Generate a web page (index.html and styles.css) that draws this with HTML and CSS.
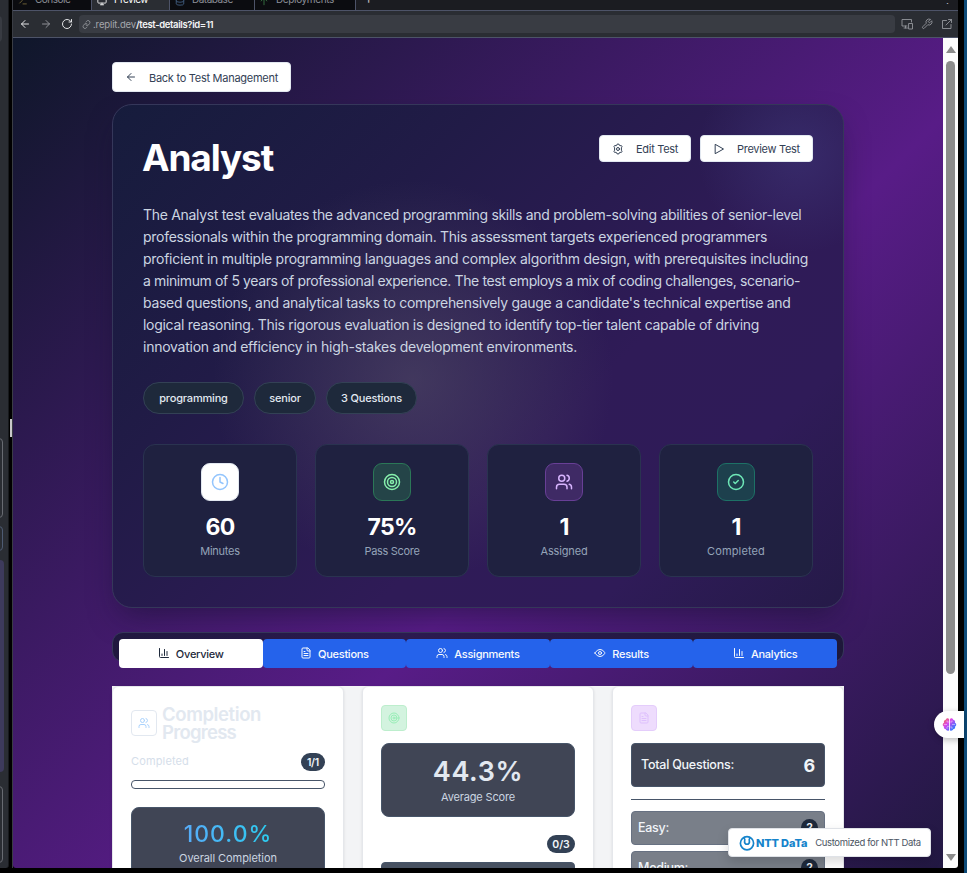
FILE: index.html
```html
<!DOCTYPE html>
<html lang="en">
<head>
<meta charset="utf-8">
<title>Test Details</title>
<link rel="stylesheet" href="styles.css">
</head>
<body>
<svg class="defs" width="0" height="0">
  <symbol id="users" viewBox="0 0 24 24"><path d="M16 21v-2a4 4 0 0 0-4-4H6a4 4 0 0 0-4 4v2"/><circle cx="9" cy="7" r="4"/><path d="M22 21v-2a4 4 0 0 0-3-3.87M16 3.13a4 4 0 0 1 0 7.75"/></symbol>
  <symbol id="target" viewBox="0 0 24 24"><circle cx="12" cy="12" r="10"/><circle cx="12" cy="12" r="6"/><circle cx="12" cy="12" r="2"/></symbol>
  <symbol id="file" viewBox="0 0 24 24"><path d="M15 2H6a2 2 0 0 0-2 2v16a2 2 0 0 0 2 2h12a2 2 0 0 0 2-2V7Z"/><path d="M14 2v4a2 2 0 0 0 2 2h4M10 9H8M16 13H8M16 17H8"/></symbol>
  <symbol id="chart" viewBox="0 0 24 24"><path d="M3 3v16a2 2 0 0 0 2 2h16M18 17V9M13 17V5M8 17v-3"/></symbol>
  <symbol id="left" viewBox="0 0 24 24"><path d="m12 19-7-7 7-7M19 12H5"/></symbol>
</svg>
<div class="screen">
  <aside class="side"><div class="side-a"></div><div class="side-b"></div><div class="side-c"></div><div class="side-d"></div><div class="side-e"></div></aside>
  <div class="gutter"><i></i></div>
  <main class="window">
    <div class="tabs-strip">
      <div class="wtab w1"><svg class="ic" viewBox="0 0 24 24"><path d="m4 17 6-6-6-6M12 19h8"/></svg><span>Console</span></div>
      <div class="wtab w2"><svg class="ic" viewBox="0 0 24 24"><rect x="2" y="3" width="20" height="14" rx="2"/><path d="M8 21h8M12 17v4"/></svg><span>Preview</span></div>
      <div class="wtab w3"><svg class="ic" viewBox="0 0 24 24"><ellipse cx="12" cy="5" rx="9" ry="3"/><path d="M3 5v14a9 3 0 0 0 18 0V5M3 12a9 3 0 0 0 18 0"/></svg><span>Database</span></div>
      <div class="wtab w4"><svg class="ic" viewBox="0 0 24 24"><path d="m5 12 7-7 7 7M12 5v16"/></svg><span>Deployments</span></div>
      <div class="wplus">+</div><div class="wdots">⋮</div>
    </div>
    <div class="toolbar">
      <svg class="ic nav" viewBox="0 0 24 24"><use href="#left"/></svg>
      <svg class="ic nav dim" viewBox="0 0 24 24"><path d="m12 5 7 7-7 7M5 12h14"/></svg>
      <svg class="ic nav re" viewBox="0 0 24 24"><path d="M21 12a9 9 0 1 1-9-9c2.520 0 4.930 1 6.740 2.740L21 8M21 3v5h-5"/></svg>
      <div class="url"><svg class="ic" viewBox="0 0 24 24"><g transform="rotate(-8 12 12)"><path d="M10 13a5 5 0 0 0 7.540.54l3-3a5 5 0 0 0-7.070-7.070l-1.720 1.710M14 11a5 5 0 0 0-7.540-.54l-3 3a5 5 0 0 0 7.070 7.070l1.710-1.710"/></g></svg><span class="host">.replit.dev</span><span class="path">/test-details?id=11</span></div>
      <svg class="ic tool" viewBox="0 0 24 24"><path d="M12 16H2V3h19v5M9 16v4M6 20h7"/><rect x="16" y="11" width="7" height="11"/></svg>
      <svg class="ic tool" viewBox="0 0 24 24"><path d="M14.700 6.300a1 1 0 0 0 0 1.400l1.600 1.600a1 1 0 0 0 1.400 0l3.770-3.770a6 6 0 0 1-7.940 7.940l-6.910 6.910a2.120 2.120 0 0 1-3-3l6.910-6.910a6 6 0 0 1 7.940-7.940z"/></svg>
      <svg class="ic tool" viewBox="0 0 24 24"><path d="M15 3h6v6M10 14 21 3M20 13v8H3V5h8"/></svg>
    </div>
    <div class="view">
      <div class="page">
        <a class="btn back"><svg class="ic" viewBox="0 0 24 24"><use href="#left"/></svg><span>Back to Test Management</span></a>
        <section class="hero">
          <div class="hero-top">
            <h1>Analyst</h1>
            <div class="actions">
              <a class="btn edit"><svg class="ic" viewBox="0 0 24 24"><path d="M9.700 4.100 10.600 2h2.800l.9 2.100 2 1.200 2.300-.3 1.600 2.600-1.400 1.900v5l1.400 1.900-1.600 2.600-2.300-.3-2 1.200-.9 2.100h-2.800l-.9-2.100-2-1.200-2.300.3-1.600-2.600 1.400-1.900v-5L3.800 7.600 5.400 5l2.300.3Z"/><circle cx="12" cy="12" r="3"/></svg><span>Edit Test</span></a>
              <a class="btn prev"><svg class="ic" viewBox="0 0 24 24"><path d="m5 3 16 9-16 9Z"/></svg><span>Preview Test</span></a>
            </div>
          </div>
          <p class="desc">
            <span>The Analyst test evaluates the advanced programming skills and problem-solving abilities of senior-level</span>
            <span>professionals within the programming domain. This assessment targets experienced programmers</span>
            <span>proficient in multiple programming languages and complex algorithm design, with prerequisites including</span>
            <span>a minimum of 5 years of professional experience. The test employs a mix of coding challenges, scenario-</span>
            <span>based questions, and analytical tasks to comprehensively gauge a candidate's technical expertise and</span>
            <span>logical reasoning. This rigorous evaluation is designed to identify top-tier talent capable of driving</span>
            <span>innovation and efficiency in high-stakes development environments.</span>
          </p>
          <div class="pills"><b class="p1">programming</b><b class="p2">senior</b><b class="p3">3 Questions</b></div>
          <div class="stats">
            <div class="stat s1"><div class="tile white"><svg class="ic" viewBox="0 0 24 24"><circle cx="12" cy="12" r="10"/><path d="M12 6v6l4 2"/></svg></div><strong>60</strong><em>Minutes</em></div>
            <div class="stat s2"><div class="tile green"><svg class="ic" viewBox="0 0 24 24"><use href="#target"/></svg></div><strong>75%</strong><em>Pass Score</em></div>
            <div class="stat s3"><div class="tile violet"><svg class="ic" viewBox="0 0 24 24"><use href="#users"/></svg></div><strong>1</strong><em>Assigned</em></div>
            <div class="stat s4"><div class="tile teal"><svg class="ic" viewBox="0 0 24 24"><circle cx="12" cy="12" r="10"/><path d="m9 12 2 2 4-4"/></svg></div><strong>1</strong><em>Completed</em></div>
          </div>
        </section>
        <nav class="tabs">
          <a class="on"><svg class="ic" viewBox="0 0 24 24"><use href="#chart"/></svg><span>Overview</span></a>
          <a><svg class="ic" viewBox="0 0 24 24"><use href="#file"/></svg><span>Questions</span></a>
          <a><svg class="ic" viewBox="0 0 24 24"><use href="#users"/></svg><span>Assignments</span></a>
          <a><svg class="ic" viewBox="0 0 24 24"><path d="M2 12s3.500-7 10-7 10 7 10 7-3.500 7-10 7-10-7-10-7Z"/><circle cx="12" cy="12" r="3"/></svg><span>Results</span></a>
          <a><svg class="ic" viewBox="0 0 24 24"><use href="#chart"/></svg><span>Analytics</span></a>
        </nav>
        <div class="panels">
          <article class="card c1">
            <div class="chead"><div class="mini outline"><svg class="ic" viewBox="0 0 24 24"><use href="#users"/></svg></div><h2>Completion<br><span>Progress</span></h2></div>
            <div class="crow"><span class="ghost">Completed</span><b class="chip">1/1</b></div>
            <div class="bar"></div>
            <div class="box overall"><strong>100.0%</strong><em>Overall Completion</em></div>
          </article>
          <article class="card c2">
            <div class="mini mint"><svg class="ic" viewBox="0 0 24 24"><use href="#target"/></svg></div>
            <div class="box avg"><strong>44.3%</strong><em>Average Score</em></div>
            <div class="crow2"><b class="chip">0/3</b></div>
            <div class="box stub"></div>
          </article>
          <article class="card c3">
            <div class="mini lilac"><svg class="ic" viewBox="0 0 24 24"><use href="#file"/></svg></div>
            <div class="box total"><span>Total Questions:</span><strong>6</strong></div>
            <hr>
            <div class="level"><span>Easy:</span><b>2</b></div>
            <div class="level"><span>Medium:</span><b>2</b></div>
          </article>
        </div>
      </div>
      <div class="scroll"><i class="up"></i><i class="thumb"></i><i class="down"></i></div>
    </div>
  </main>
  <div class="edge"></div>
</div>
<div class="brain"><svg viewBox="0 0 24 24"><defs><linearGradient id="bg1" x1="0" y1="0" x2="24" y2="24" gradientUnits="userSpaceOnUse"><stop offset="0.1" stop-color="#f9703e"/><stop offset=".4" stop-color="#d946ef"/><stop offset=".8" stop-color="#2f7bff"/></linearGradient></defs><path fill="url(#bg1)" d="M11.300 3C9 1 6.500 2.500 6 4.500 3.500 5 2.500 7 3.200 9 .5 10.500.5 13.500 3 15c-.5 2.500 1 4.500 3.200 4.500C7 22 10 22.500 11.300 21ZM12.700 3C15 1 17.500 2.500 18 4.500 20.500 5 21.500 7 20.800 9c2.700 1.500 2.700 4.500.2 6 .5 2.500-1 4.500-3.200 4.500C17 22 14 22.500 12.700 21Z"/><path d="M11 8H8V5.500M3 12h5M8 16v3M11 15H8M13 8h3V5.500M21 12h-5M16 19v-3h-3" fill="none" stroke="#fff" stroke-width=".7"/></svg></div>
<div class="badge"><svg class="ring" viewBox="0 0 16 16"><circle cx="8" cy="8.300" r="6.600"/><path d="M4.600 2.600C6.500 4 6 5 5.600 6.300a2.450 2.450 0 1 0 4.800 0C10 5 9.500 4 11.400 2.600"/></svg><span class="ntt">NTT DaTa</span><span class="cust">Customized for NTT Data</span></div>
</body>
</html>
```
FILE: styles.css
```css
* { box-sizing: border-box; }
body { margin: 0; width: 967px; height: 873px; overflow: hidden; position: relative; background: #000; font-family: Inter, "Open Sans", sans-serif; font-size: 11px; color: #e2e8f0; }
.defs { position: absolute; }
.ic { fill: none; stroke: currentColor; stroke-width: 2; stroke-linecap: round; stroke-linejoin: round; flex: none; display: block; }
span, b, em, strong, h1 { white-space: nowrap; }
em { font-style: normal; }
.screen { display: flex; height: 868px; }

/* neighbouring pane */
.side { width: 9px; background: #2a2d33; border-right: 1px solid #17191d; border-radius: 0 0 3px 0; overflow: hidden; display: flex; flex-direction: column; flex: none; }
.side div { margin-left: -5px; border-radius: 0 4px 4px 0; flex: none; }
.side-a { height: 26px; width: 7px; background: #383b42; margin-top: 16px; }
.side-b { height: 80px; width: 8px; border: 1px solid #686b72; margin-top: 396px; }
.side-c { height: 25px; width: 8px; border: 1px solid #4e5b73; margin-top: 8px; }
.side-d { height: 212px; width: 9px; background: #3d3a5c; margin-top: 9px; }
.side-e { height: 77px; width: 8px; border: 1px solid #686b72; margin-top: 14px; }
.gutter { width: 4px; display: flex; align-items: center; flex: none; border-right: 1px solid #3a3d44; }
.gutter i { width: 2px; height: 18px; background: #c9c9c9; margin: -12px 0 0 1px; }

/* preview window chrome */
.window { width: 945px; display: flex; flex-direction: column; overflow: hidden; border-radius: 0 0 3px 3px; }
.tabs-strip { height: 11px; display: flex; background: #1b1c21; border-bottom: 1px solid #4d5368; overflow: hidden; flex: none; }
.wtab { height: 11px; display: flex; align-items: flex-end; gap: 7px; background: #0b0c10; color: #8d9098; font-size: 10px; line-height: 14px; border-right: 1px solid #4d5368; flex: none; padding-bottom: 2px; padding-left: 5px; letter-spacing: -.5px; }
.wtab svg { width: 10px; height: 10px; margin-bottom: 3px; }
.wtab span { margin-bottom: 3px; }
.w1 { width: 79px; } .w1 svg { color: #7d6d3c; }
.w2 { width: 78px; background: #2a2d33; color: #fff; }
.w3 { width: 85px; } .w3 svg { color: #46658a; }
.w4 { width: 101px; padding-left: 4px; letter-spacing: -.36px; } .w4 svg { color: #3b7c47; }
.wplus { color: #b5b7bb; font-size: 14px; line-height: 0; margin: -2px 0 0 8px; }
.wdots { color: #b5b7bb; font-size: 11px; line-height: 0; margin-left: auto; width: 16px; }
.toolbar { height: 27px; background: #2a2d33; border-bottom: 1px solid #4d5368; display: flex; align-items: center; flex: none; padding: 0 6px; }
.nav { width: 12px; height: 12px; margin-right: 9px; color: #e3e4e6; }
.nav.dim { color: #8f9197; }
.nav.re { margin-right: 6px; }
.url { height: 18px; width: 816px; background: #393c43; border-radius: 4px; display: flex; align-items: center; font-size: 9.500px; padding-left: 3px; margin-right: 6px; flex: none; }
.url svg { width: 9px; height: 9px; color: #9a9ca2; margin-right: 2px; }
.host { color: #a4a6ab; letter-spacing: -.134px; }
.path { color: #f5f5f6; font-weight: 600; letter-spacing: -.35px; }
.tool { width: 12px; height: 12px; color: #9a9ca2; margin-right: 8px; stroke-width: 1.700; }

.view { flex: 1; display: flex; min-height: 0; }
.page { width: 930px; padding: 24px 99px 0; overflow: hidden; background: linear-gradient(135deg, #0f172a 0%, #581c87 50%, #0f172a 100%) 0 0 / 930px 1088px; }
.scroll { width: 15px; background: #fcfcfc; display: flex; flex-direction: column; align-items: center; padding: 8px 0 7px; }
.up, .down { width: 0; height: 0; border: 5px solid transparent; }
.up { border-bottom: 7px solid #8b8b8b; border-top: 0; }
.down { border-top: 7px solid #8b8b8b; border-bottom: 0; margin-top: auto; }
.thumb { width: 9px; height: 613px; border-radius: 5px; background: #8b8b8b; margin-top: 8px; }
.edge { width: 3px; height: 873px; margin-left: auto; background: #0d4a77; }

.btn { display: inline-flex; align-items: center; background: #fff; border: 1px solid #e2e8f0; border-radius: 4px; color: #334155; font-size: 11px; }
.btn svg { width: 12px; height: 12px; }
.btn span { margin-top: 1px; }
.back { width: 179px; height: 30px; padding-left: 12px; display: flex; }
.back svg { margin-right: 12px; }
.back span { letter-spacing: -.27px; }

/* test summary */
.hero { width: 732px; height: 504px; margin-top: 12px; padding: 30px; border: 1px solid #35375a; border-radius: 20px; box-shadow: 0 14px 30px -8px rgba(15, 15, 40, .5);
  background: radial-gradient(circle at 685px 48px, rgba(66, 62, 130, .45), rgba(66, 62, 130, 0) 100px), radial-gradient(circle at 300px 275px, rgba(90, 84, 108, .5), rgba(90, 84, 108, 0) 200px), linear-gradient(135deg, #161c3c 0%, #211b47 30%, #2f1b57 62%, #2f1b58 80%, #251a48 100%); }
.hero-top { display: flex; justify-content: space-between; height: 69px; }
h1 { margin: 0 0 0 -1px; font-size: 37px; line-height: 46px; font-weight: 700; color: #fff; letter-spacing: -1.150px; }
.actions { display: flex; gap: 9px; }
.actions .btn { height: 27px; }
.edit { width: 92px; padding-left: 12px; }
.prev { width: 113px; padding-left: 12px; }
.actions svg { margin-right: 12px; }
.actions span { letter-spacing: -.29px; }
.desc { margin: 0; font-size: 14px; line-height: 22px; color: #cbd5e1; }
.desc span { display: block; letter-spacing: -.309px; }
.desc span:nth-child(2) { letter-spacing: -.282px; }
.desc span:nth-child(3) { letter-spacing: -.266px; }
.desc span:nth-child(4) { letter-spacing: -.384px; }
.desc span:nth-child(5) { letter-spacing: -.292px; }
.desc span:nth-child(6) { letter-spacing: -.302px; }
.desc span:nth-child(7) { letter-spacing: -.25px; }
.pills { display: flex; gap: 10px; margin-top: 24px; }
.pills b { height: 32px; border-radius: 16px; border: 1px solid #334155; background: #1e293b; display: flex; align-items: center; justify-content: center; font-weight: 500; font-size: 11px; letter-spacing: -.18px; }
.p1 { width: 101px; } .p2 { width: 62px; } .p3 { width: 91px; }
.stats { display: grid; grid-template-columns: repeat(4, 1fr); gap: 18px; margin-top: 30px; }
.stat { height: 133px; border: 1px solid #2a3350; border-radius: 12px; background: #1f2140; display: flex; flex-direction: column; align-items: center; padding-top: 18px; }
.tile { width: 38px; height: 38px; border-radius: 9px; border: 1px solid; display: flex; align-items: center; justify-content: center; }
.tile svg { width: 18px; height: 18px; }
.white { background: #fff; border-color: #e2e8f0; color: #93c5fd; }
.green { background: #244448; border-color: #2b7757; color: #86efac; }
.violet { background: #3f2a65; border-color: #683f96; color: #d8b4fe; }
.teal { background: #1d404d; border-color: #1d7166; color: #6ee7b7; }
.stat strong { font-size: 23px; line-height: 28px; margin-top: 12px; color: #fff; font-weight: 700; letter-spacing: -.73px; }
.stat em { font-size: 11px; line-height: 16px; margin-top: 2px; color: #94a3b8; letter-spacing: -.26px; }
.s2 em { letter-spacing: -.322px; }
.s3 em { letter-spacing: -.158px; }
.s4 em { letter-spacing: .142px; }

.tabs { height: 30px; margin-top: 24px; padding: 6px; border: 1px solid #35375a; border-radius: 11px; background: linear-gradient(90deg, #20183f, #2c1a50 40%, #1e183a); display: grid; grid-template-columns: repeat(5, 1fr); }
.tabs a { height: 29px; background: #2563eb; color: #f8fafc; border-radius: 4px; display: flex; align-items: center; justify-content: center; gap: 6px; font-weight: 500; letter-spacing: -.26px; }
.tabs .on { background: #fff; color: #1e293b; }
.tabs svg { width: 12px; height: 12px; margin-top: -2px; }

/* overview cards */
.panels { display: grid; grid-template-columns: repeat(3, 1fr); gap: 18px; background: #f3f4f6; height: 300px; margin-top: 24px; }
.card { background: #fff; border: 1px solid #e5e7eb; border-radius: 6px; padding: 18px; box-shadow: 0 1px 3px rgba(0, 0, 0, .1); }
.mini { width: 26px; height: 26px; border: 1px solid; border-radius: 4px; display: flex; align-items: center; justify-content: center; }
.mini svg { width: 12px; height: 12px; }
.outline { border-color: #e2e8f0; color: #a9d2fd; margin-top: -1px; }
.mint { background: #d3f3df; border-color: #bdeecd; color: #98eeb7; }
.lilac { background: #eedcfd; border-color: #e4cdfb; color: #dec0fd; }
.chead { display: flex; align-items: center; gap: 5px; height: 37px; }
h2 { margin: -2px 0 0; font-size: 18.500px; line-height: 18px; font-weight: 600; color: #e2e8f0; letter-spacing: -.384px; }
h2 span { letter-spacing: -.74px; }
.crow { display: flex; justify-content: space-between; align-items: center; margin-top: 10px; height: 20px; }
.ghost { color: #d5deea; letter-spacing: .142px; margin-top: -2px; }
.chip { height: 18px; padding: 0 6px; border-radius: 9px; background: #334155; color: #f1f5f9; font-weight: 600; font-size: 10.500px; display: flex; align-items: center; letter-spacing: -.25px; }
.c2 .chip { letter-spacing: 0; width: 28px; justify-content: center; padding: 0; }
.bar { height: 9px; border: 1px solid #475569; border-radius: 4px; margin-top: 8px; }
.box { background: #404555; border: 1px solid #475569; border-radius: 8px; display: flex; flex-direction: column; align-items: center; }
.overall { height: 74px; margin-top: 18px; padding-top: 11px; }
.overall strong { font-size: 23px; line-height: 30px; font-weight: 500; letter-spacing: 1px; background: linear-gradient(90deg, #60a5fa, #22d3ee); background-size: 120px 100%; background-position: center; -webkit-background-clip: text; background-clip: text; color: transparent; }
.box em { line-height: 16px; margin-top: 1px; color: #cbd5e1; letter-spacing: -.06px; }
.avg { height: 74px; margin-top: 12px; padding-top: 11px; }
.avg strong { font-size: 27px; line-height: 34px; font-weight: 600; color: #e2e8f0; letter-spacing: .6px; }
.avg em { margin-top: 0; letter-spacing: -.162px; }
.crow2 { display: flex; justify-content: flex-end; margin-top: 18px; }
.stub { height: 40px; margin-top: 9px; border-radius: 4px; background: #475161; }
.total { height: 44px; margin-top: 12px; padding: 0 9px; flex-direction: row; justify-content: space-between; border-radius: 4px; color: #f1f5f9; font-size: 12.500px; font-weight: 500; letter-spacing: -.239px; }
.total span { margin-top: -2px; }
.total strong { font-size: 18px; }
hr { border: 0; height: 1px; background: #475569; margin: 12px 0 11px; }
.level { height: 34px; background: #797f89; border: 1px solid #677182; border-radius: 4px; display: flex; align-items: center; justify-content: space-between; padding: 0 6px; margin-bottom: 6px; color: #f1f5f9; font-size: 12.500px; font-weight: 500; letter-spacing: -.28px; }
.level span { margin-top: -1px; }
.level b { width: 17px; height: 18px; border-radius: 9px; background: #1e293b; font-size: 10.500px; display: flex; align-items: center; justify-content: center; margin-top: -1px; }

/* floating widgets */
.brain { position: absolute; left: 934px; top: 711px; width: 30px; height: 27px; border-radius: 14px 0 0 14px; background: #fff; box-shadow: 0 2px 6px rgba(0, 0, 0, .25); padding: 6px 0 0 8px; }
.brain svg { width: 15px; height: 15px; display: block; }
.badge { position: absolute; left: 728px; top: 828px; width: 203px; height: 29px; border: 1px solid #dfe2e7; border-radius: 4px; background: #fff; box-shadow: 0 5px 12px rgba(0, 0, 0, .15); display: flex; align-items: center; padding-left: 10px; font-size: 9.500px; color: #4b5563; }
.ring { width: 16px; height: 16px; fill: none; stroke: #1684cb; stroke-width: 1.700; margin-right: 1px; }
.ntt { color: #1684cb; font-weight: 800; font-size: 11px; margin-right: 8px; letter-spacing: -.15px; }
.cust { letter-spacing: -.37px; }
```
